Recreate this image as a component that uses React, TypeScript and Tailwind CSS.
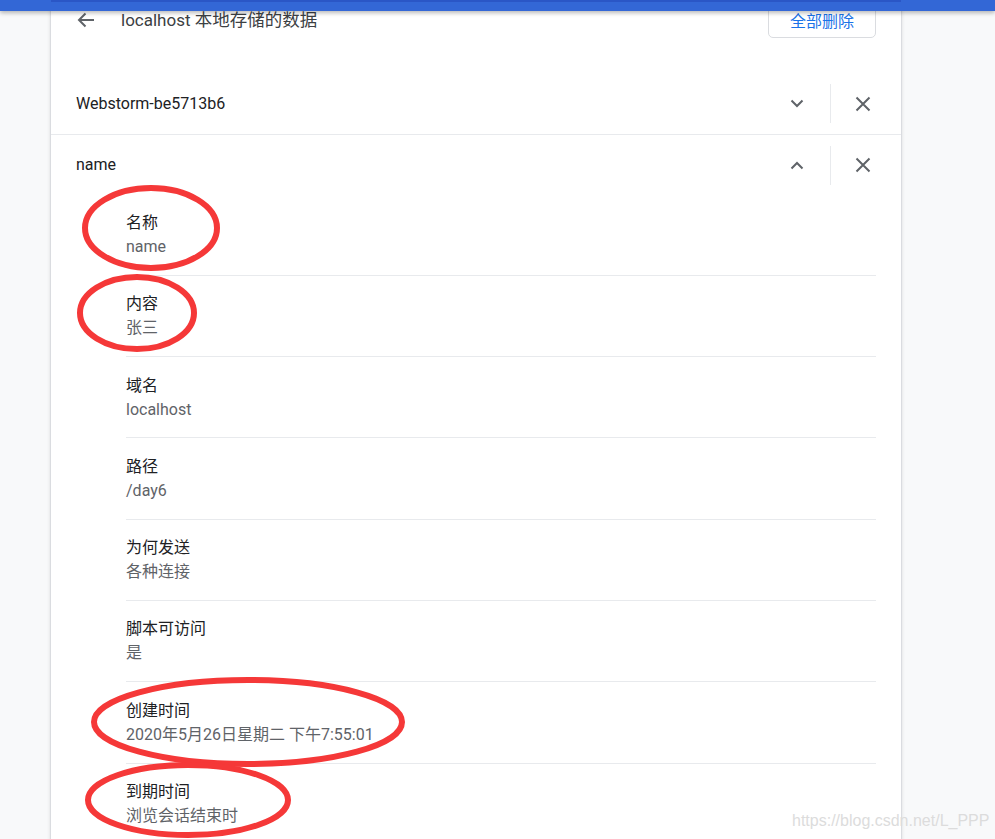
import React from "react";

const CJK = /([\u3000-\u303f\u3400-\u9fff\uff00-\uffef]+)/;

function T({ text, cjk = "text-[16px]" }: { text: string; cjk?: string }) {
  const parts = text.split(CJK);
  return (
    <>
      {parts.map((p, i) =>
        p === "" ? null : CJK.test(p) ? (
          <span key={i} className={`${cjk} leading-none font-['Noto_Sans_CJK_SC',sans-serif]`}>
            {p}
          </span>
        ) : (
          <span key={i}>{p}</span>
        )
      )}
    </>
  );
}

function Chevron({ up }: { up?: boolean }) {
  return (
    <svg width="14" height="9" viewBox="0 0 14 9" className={up ? "rotate-180" : ""}>
      <path d="M1.5 1.5 L7 7 L12.5 1.5" fill="none" stroke="#5f6368" strokeWidth="2" />
    </svg>
  );
}

function Close() {
  return (
    <svg width="16" height="16" viewBox="0 0 16 16">
      <path d="M1.5 1.5 L14.5 14.5 M14.5 1.5 L1.5 14.5" fill="none" stroke="#5f6368" strokeWidth="2" />
    </svg>
  );
}

function Row({ label, up, h }: { label: string; up?: boolean; h: string }) {
  return (
    <div className={`flex items-center ${h} pl-[25px] pr-[18px]`}>
      <div className="flex-1 text-[16px] text-[#202124] leading-5">{label}</div>
      <div className="flex w-10 justify-center">
        <Chevron up={up} />
      </div>
      <div className="mx-[12.5px] h-[39px] w-px bg-[#e8eaed]" />
      <div className="flex w-10 justify-center">
        <Close />
      </div>
    </div>
  );
}

const items: [string, string][] = [
  ["名称", "name"],
  ["内容", "张三"],
  ["域名", "localhost"],
  ["路径", "/day6"],
  ["为何发送", "各种连接"],
  ["脚本可访问", "是"],
  ["创建时间", "2020年5月26日星期二 下午7:55:01"],
  ["到期时间", "浏览会话结束时"],
];

export default function App() {
  return (
    <div className="relative h-[839px] overflow-hidden bg-[#f8f9fa] font-['Roboto','Noto_Sans_CJK_SC',sans-serif]">
      <div className="absolute left-0 right-0 top-0 z-20 h-[11px] bg-[#3367d6] shadow-[0_2px_4px_rgba(0,0,0,0.28)]">
        <div className="ml-[51px] h-[2px] w-[850px] bg-[#2a56c6]" />
      </div>
      <div className="ml-[50px] w-[852px] border-x border-[#dadce0] bg-white shadow-[0_0_3px_rgba(60,64,67,0.15)]">
        <div className="flex h-10 items-center pl-[26px] pr-[25px]">
          <svg width="18" height="16" viewBox="0 0 18 16">
            <path d="M17 8 H2 M8.5 1.5 L2 8 L8.5 14.5" fill="none" stroke="#5f6368" strokeWidth="2" />
          </svg>
          <div className="ml-[26px] flex h-6 flex-1 items-center text-[17px] leading-6 text-[#3c4043]">
            <div className="h-6">
              <T text="localhost 本地存储的数据" cjk="text-[17.5px]" />
            </div>
          </div>
          <button className="flex h-9 w-[108px] items-center justify-center rounded-[5px] border border-[#dadce0] bg-white text-[16px] text-[#1a73e8] font-['Noto_Sans_CJK_SC',sans-serif]">
            全部删除
          </button>
        </div>
        <div className="mt-[33px] border-b border-[#e8eaed]">
          <Row label="Webstorm-be5713b6" h="h-[61px]" />
        </div>
        <Row label="name" up h="h-[60px]" />
        <div className="pl-[75px] pr-[25px]">
          {items.map(([k, v], i) => (
            <div
              key={k}
              className={`${i > 0 ? "border-t border-[#e8eaed] pt-[18.5px]" : "pt-[18px]"} pb-[17.8px]`}
            >
              <div className="h-5 whitespace-nowrap text-[16px] leading-5 text-[#202124]">
                <T text={k} />
              </div>
              <div className="mt-1 h-5 whitespace-nowrap text-[16px] leading-5 text-[#5f6368]">
                <T text={v} />
              </div>
            </div>
          ))}
        </div>
      </div>
      <svg className="pointer-events-none absolute left-0 top-0 z-10" width="995" height="839">
        <g fill="none" stroke="#f53838" strokeWidth="6">
          <ellipse cx="151" cy="228" rx="66" ry="40" />
          <ellipse cx="137" cy="313" rx="57" ry="36" />
          <ellipse cx="248" cy="722" rx="154" ry="42" />
          <ellipse cx="188" cy="800" rx="100" ry="35" />
        </g>
      </svg>
      <div className="absolute left-[792px] top-[809px] z-10 font-['Liberation_Sans',sans-serif] text-[16px] text-[#dcdcdc]">
        https://blog.csdn.net/L_PPP
      </div>
    </div>
  );
}
